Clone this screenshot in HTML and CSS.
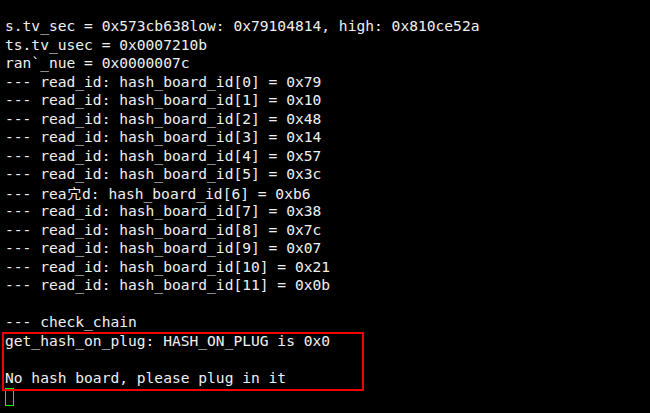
FILE: index.html
```html
<!DOCTYPE html>
<html>
<head>
<meta charset="utf-8">
<link rel="stylesheet" href="styles.css">
</head>
<body>
<div class="term">
<div class="line">s.tv_sec = 0x573cb638low: 0x79104814, high: 0x810ce52a</div>
<div class="line">ts.tv_usec = 0x0007210b</div>
<div class="line">ran`_nue = 0x0000007c</div>
<div class="line">--- read_id: hash_board_id[0] = 0x79</div>
<div class="line">--- read_id: hash_board_id[1] = 0x10</div>
<div class="line">--- read_id: hash_board_id[2] = 0x48</div>
<div class="line">--- read_id: hash_board_id[3] = 0x14</div>
<div class="line">--- read_id: hash_board_id[4] = 0x57</div>
<div class="line">--- read_id: hash_board_id[5] = 0x3c</div>
<div class="line">--- rea<span class="wide">宂</span>d: hash_board_id[6] = 0xb6</div>
<div class="line">--- read_id: hash_board_id[7] = 0x38</div>
<div class="line">--- read_id: hash_board_id[8] = 0x7c</div>
<div class="line">--- read_id: hash_board_id[9] = 0x07</div>
<div class="line">--- read_id: hash_board_id[10] = 0x21</div>
<div class="line">--- read_id: hash_board_id[11] = 0x0b</div>
<div class="line"> </div>
<div class="line">--- check_chain</div>
<div class="marked">
<div class="line">get_hash_on_plug: HASH_ON_PLUG is 0x0</div>
<div class="line"> </div>
<div class="line">No hash board, please plug in it</div>
</div>
<div class="cursor-row"><div class="cursor"></div></div>
</div>
</body>
</html>
```
FILE: styles.css
```css
html, body {
  margin: 0;
  padding: 0;
  background: #000;
}
body {
  width: 650px;
  height: 413px;
  overflow: hidden;
}
.term {
  padding: 17.4px 0 0 5px;
  font-family: "DejaVu Sans Mono", "Noto Sans CJK SC", monospace;
  font-size: 14.6px;
  line-height: 18.5px;
  color: #f0f0f0;
}
.line {
  white-space: pre;
  height: 18.5px;
}
.wide {
  display: inline-block;
  width: 2ch;
  text-align: center;
  font-family: "Noto Sans CJK SC", sans-serif;
  font-size: 14px;
  line-height: 18.5px;
}
.marked {
  position: relative;
}
.marked::after {
  content: "";
  position: absolute;
  left: -3.3px;
  top: 0;
  width: 362px;
  height: 59px;
  box-sizing: border-box;
  border: 2px solid #f20000;
}
.cursor-row {
  padding-top: 0.6px;
}
.cursor {
  width: 9px;
  height: 18px;
  box-sizing: border-box;
  border: 1px solid #00ff00;
}
```
